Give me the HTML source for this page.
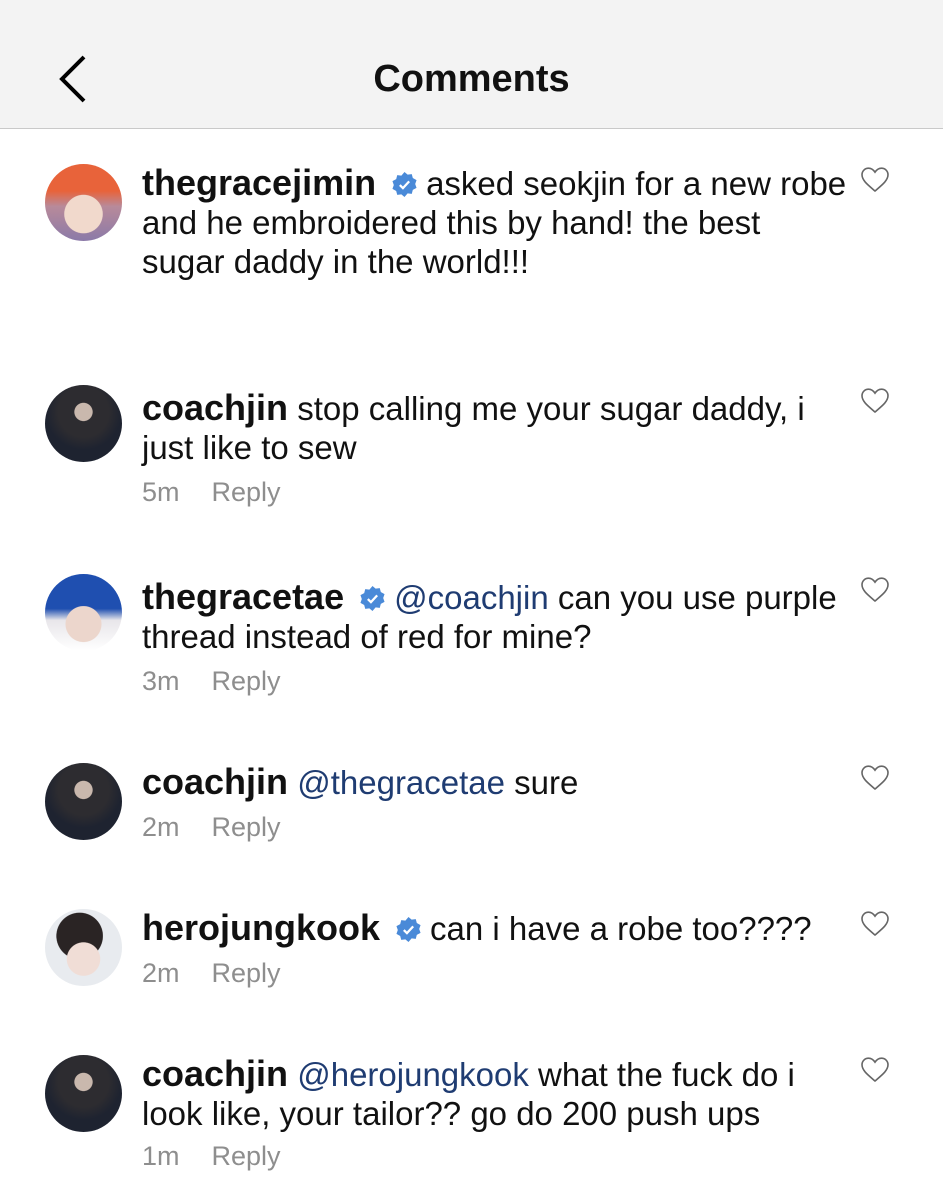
<!DOCTYPE html>
<html><head><meta charset="utf-8"><style>
*{margin:0;padding:0;box-sizing:border-box}
body{width:943px;height:1200px;background:#fff;font-family:"Liberation Sans",Arial,sans-serif;color:#111;position:relative;overflow:hidden}
.hdr{position:absolute;left:0;top:0;width:943px;height:129px;background:#f3f3f3;border-bottom:1.5px solid #c9c9c9}
.title{position:absolute;left:0;width:943px;top:57px;text-align:center;font-size:38px;font-weight:bold;line-height:44px}
.back{position:absolute;left:52px;top:54px}
.av{position:absolute;left:45px;width:77px;height:77px;border-radius:50%}
.c{position:absolute;left:142px;font-size:33px;line-height:39px;white-space:nowrap}
.c b{font-size:36px}
.m{color:#1f3c72}
.meta{position:absolute;left:142px;font-size:27px;color:#8e8e8e;line-height:30px}
.meta span{margin-left:32px}
.v{display:inline-block;vertical-align:-3px;margin:0 8px 0 15px}
.h{position:absolute;left:860px}
.jin{background:radial-gradient(circle at 50% 35%,#c9b8ad 0 14%,#2d2c30 15% 40%,#1e2330 60%),#222}
</style></head><body>
<div class="hdr"><svg class="back" width="40" height="50" viewBox="0 0 40 50"><path d="M32 3 L10 25 L32 47" fill="none" stroke="#000" stroke-width="4"/></svg><div class="title">Comments</div></div>

<svg width="0" height="0" style="position:absolute"><defs>
<symbol id="vb" viewBox="0 0 26 26"><path d="M13 1l3 2.5 4-.5 1 3.8 3.6 2-1.3 3.7 1.3 3.7-3.6 2-1 3.8-4-.5L13 25l-3-2.5-4 .5-1-3.8-3.6-2L2.7 13.5 1.4 9.8 5 7.8 6 4l4 .5z" fill="#4a8ad8"/><path d="M8.5 13.5l3 3 6-6.5" fill="none" stroke="#fff" stroke-width="2.2"/></symbol>
<symbol id="ht" viewBox="0 0 30 28"><path d="M15 25C8 19 2 14.5 2 8.8 2 5 5 2.2 8.5 2.2c2.8 0 4.9 1.6 6.5 4 1.6-2.4 3.7-4 6.5-4C25 2.2 28 5 28 8.8 28 14.5 22 19 15 25z" fill="none" stroke="#666" stroke-width="1.6"/></symbol>
</defs></svg>

<div class="av" style="top:164px;background:radial-gradient(circle at 50% 65%,#f1d9cc 0 30%,transparent 31%),linear-gradient(180deg,#e8633a 0 35%,#b88a9a 55%,#8b7aa8 100%)"></div>
<div class="c" style="top:163px"><b>thegracejimin</b><svg class="v" width="27" height="27"><use href="#vb"/></svg>asked seokjin for a new robe<br>and he embroidered this by hand! the best<br>sugar daddy in the world!!!</div>
<svg class="h" style="top:166px" width="30" height="28"><use href="#ht"/></svg>

<div class="av jin" style="top:385px"></div>
<div class="c" style="top:388px"><b>coachjin</b> stop calling me your sugar daddy, i<br>just like to sew</div>
<div class="meta" style="top:477px">5m<span>Reply</span></div>
<svg class="h" style="top:387px" width="30" height="28"><use href="#ht"/></svg>

<div class="av" style="top:574px;background:radial-gradient(circle at 50% 65%,#ecd6cc 0 28%,transparent 29%),linear-gradient(180deg,#1f4fb0 0 45%,#e8e6ea 60%,#fff 100%)"></div>
<div class="c" style="top:577px"><b>thegracetae</b><svg class="v" width="27" height="27"><use href="#vb"/></svg><span class="m">@coachjin</span> can you use purple<br>thread instead of red for mine?</div>
<div class="meta" style="top:666px">3m<span>Reply</span></div>
<svg class="h" style="top:576px" width="30" height="28"><use href="#ht"/></svg>

<div class="av jin" style="top:763px"></div>
<div class="c" style="top:762px"><b>coachjin</b> <span class="m">@thegracetae</span> sure</div>
<div class="meta" style="top:812px">2m<span>Reply</span></div>
<svg class="h" style="top:764px" width="30" height="28"><use href="#ht"/></svg>

<div class="av" style="top:909px;background:radial-gradient(circle at 50% 65%,#f0ddd6 0 26%,transparent 27%),radial-gradient(circle at 45% 35%,#2a2424 0 35%,transparent 36%),#e8ebef"></div>
<div class="c" style="top:908px"><b>herojungkook</b><svg class="v" width="27" height="27"><use href="#vb"/></svg>can i have a robe too????</div>
<div class="meta" style="top:958px">2m<span>Reply</span></div>
<svg class="h" style="top:910px" width="30" height="28"><use href="#ht"/></svg>

<div class="av jin" style="top:1055px"></div>
<div class="c" style="top:1054px"><b>coachjin</b> <span class="m">@herojungkook</span> what the fuck do i<br>look like, your tailor?? go do 200 push ups</div>
<div class="meta" style="top:1141px">1m<span>Reply</span></div>
<svg class="h" style="top:1056px" width="30" height="28"><use href="#ht"/></svg>
</body></html>
